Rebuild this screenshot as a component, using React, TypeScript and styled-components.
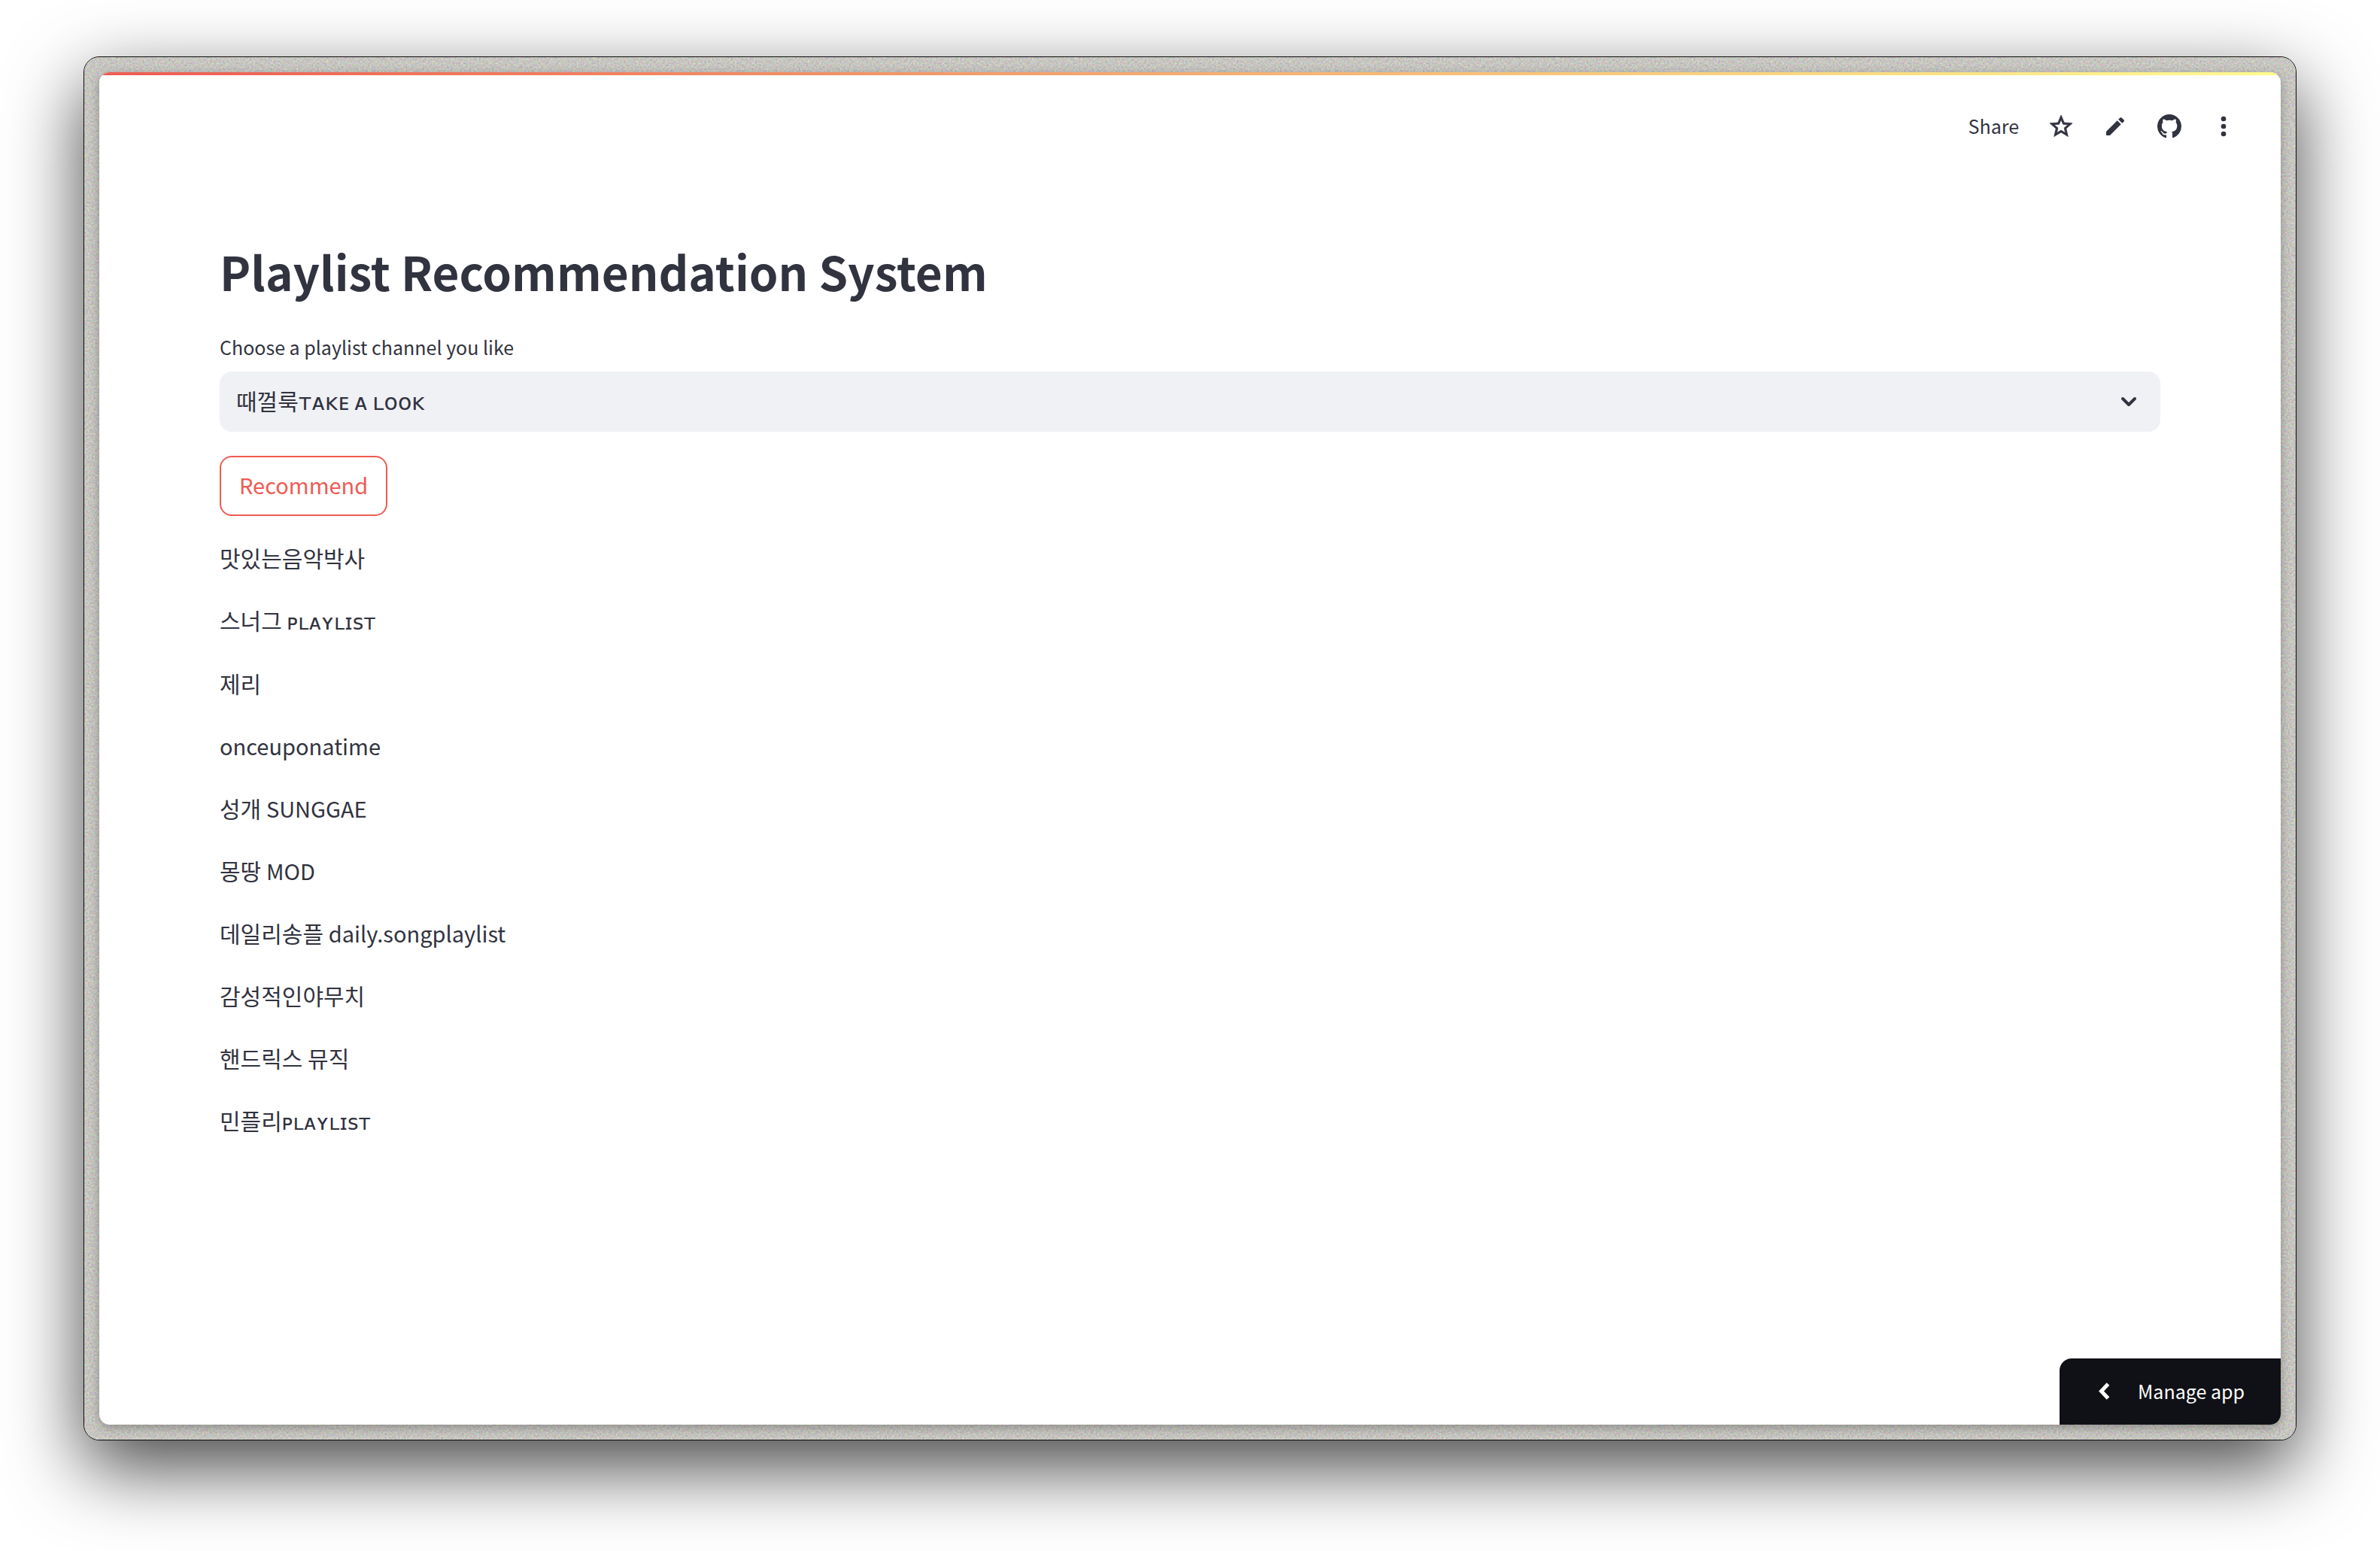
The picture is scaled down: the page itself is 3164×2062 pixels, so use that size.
import React from "react";
import styled, { createGlobalStyle } from "styled-components";

const INK = "#31333f";
const RED = "#ee5b53";

const GlobalStyle = createGlobalStyle`
  *, *::before, *::after { box-sizing: border-box; }
  body {
    margin: 0;
    background: #fff;
    color: ${INK};
    font-family: "Noto Sans CJK KR", "DejaVu Sans", sans-serif;
  }
  button, select {
    font-family: inherit;
    color: inherit;
    margin: 0;
    cursor: pointer;
  }
`;

const Desktop = styled.div`
  display: flex;
  min-height: 100vh;
  padding: 75px 111px 147px;
`;

const Frame = styled.div`
  position: relative;
  display: flex;
  flex: 1;
  padding: 20px;
  border: 1px solid #0c0c0c;
  border-radius: 21px;
  background: #c3c2bc;
  box-shadow: 0 36px 100px rgba(0, 0, 0, 0.73);
`;

const Grain = styled.svg`
  position: absolute;
  inset: 0;
  width: 100%;
  height: 100%;
  border-radius: 20px;
`;

const PageShadow = styled.div`
  position: relative;
  display: flex;
  flex: 1;
  border-radius: 14px;
  box-shadow: 0 4px 14px rgba(0, 0, 0, 0.3);
`;

const Page = styled.div`
  display: flex;
  flex: 1;
  flex-direction: column;
  overflow: hidden;
  border-radius: 14px;
  background: #fff;
`;

const Decoration = styled.div`
  height: 4px;
  background: linear-gradient(90deg, ${RED}, #fffb8c);
`;

const Toolbar = styled.header`
  display: flex;
  justify-content: flex-end;
  align-items: center;
  gap: 16px;
  height: 136px;
  padding: 0 48px;
`;

const ToolButton = styled.button`
  display: flex;
  align-items: center;
  justify-content: center;
  min-width: 56px;
  height: 56px;
  padding: 0;
  border: 0;
  background: none;
`;

const ShareButton = styled(ToolButton)`
  padding: 0 12px 2px;
  font-size: 25px;
  line-height: 40px;
`;

const Content = styled.main`
  display: flex;
  flex: 1;
  flex-direction: column;
  align-items: flex-start;
  padding: 80px 160px;
`;

const Title = styled.h1`
  margin: 0;
  font-size: 62px;
  font-weight: 700;
  line-height: 88px;
`;

const Field = styled.div`
  display: flex;
  flex-direction: column;
  gap: 13px;
  width: 100%;
  margin: 37px 0 32px;
`;

const Label = styled.label`
  font-size: 25px;
  line-height: 40px;
`;

const SelectBox = styled.div`
  display: grid;
  align-items: center;
  > * { grid-area: 1 / 1; }
  > svg {
    justify-self: end;
    margin-right: 24px;
    pointer-events: none;
  }
`;

const Select = styled.select`
  width: 100%;
  height: 80px;
  padding: 0 80px 4px 22px;
  border: 0;
  border-radius: 16px;
  background: #f0f1f5;
  font-size: 30px;
  appearance: none;
`;

const Recommend = styled.button`
  height: 80px;
  padding: 0 24px 4px;
  border: 2px solid ${RED};
  border-radius: 16px;
  background: #fff;
  color: ${RED};
  font-size: 29px;
  line-height: 51px;
`;

const Results = styled.div`
  display: flex;
  flex-direction: column;
  gap: 32px;
  margin-top: 30px;
`;

const Result = styled.p`
  margin: 0;
  font-size: 30px;
  line-height: 51px;
`;

const Latin = styled.span`
  font-size: 29px;
`;

const SmallCaps = styled.span`
  font-size: 28px;
`;

const ManageApp = styled.button`
  display: flex;
  align-items: center;
  align-self: flex-end;
  gap: 24px;
  height: 88px;
  padding: 0 48px 2px 40px;
  border: 0;
  border-radius: 16px 0 0 0;
  background: #101116;
  color: #fff;
  font-size: 25px;
  line-height: 40px;
`;

const StarIcon = () => (
  <svg width="36" height="36" viewBox="0 0 24 24" fill="currentColor" aria-hidden="true">
    <path
      stroke="currentColor"
      strokeWidth="0.5"
      d="M22 9.24l-7.19-.62L12 2 9.19 8.63 2 9.24l5.46 4.73L5.82 21 12 17.27 18.18 21l-1.63-7.03L22 9.24zM12 15.4l-3.76 2.27 1-4.28-3.32-2.88 4.38-.38L12 6.1l1.71 4.04 4.38.38-3.32 2.88 1 4.28L12 15.4z"
    />
  </svg>
);

const PencilIcon = () => (
  <svg width="32" height="32" viewBox="0 0 24 24" fill="currentColor" aria-hidden="true">
    <path d="M3 17.46v3.04c0 .28.22.5.5.5h3.04c.13 0 .26-.05.35-.15L17.81 9.94l-3.75-3.75L3.15 17.1c-.1.1-.15.22-.15.36zM20.71 7.04a.996.996 0 000-1.41l-2.34-2.34a.996.996 0 00-1.41 0l-1.83 1.83 3.75 3.75 1.83-1.83z" />
  </svg>
);

const GitHubIcon = () => (
  <svg width="32" height="32" viewBox="0 0 16 16" fill="currentColor" aria-hidden="true">
    <path d="M8 0C3.58 0 0 3.58 0 8c0 3.54 2.29 6.53 5.47 7.59.4.07.55-.17.55-.38 0-.19-.01-.82-.01-1.49-2.01.37-2.53-.49-2.69-.94-.09-.23-.48-.94-.82-1.13-.28-.15-.68-.52-.01-.53.63-.01 1.08.58 1.23.82.72 1.21 1.87.87 2.33.66.07-.52.28-.87.51-1.07-1.78-.2-3.64-.89-3.64-3.95 0-.87.31-1.59.82-2.15-.08-.2-.36-1.02.08-2.12 0 0 .67-.21 2.2.82.64-.18 1.32-.27 2-.27s1.36.09 2 .27c1.53-1.04 2.2-.82 2.2-.82.44 1.1.16 1.92.08 2.12.51.56.82 1.27.82 2.15 0 3.07-1.87 3.75-3.65 3.95.29.25.54.73.54 1.48 0 1.07-.01 1.93-.01 2.2 0 .21.15.46.55.38A8.01 8.01 0 0016 8c0-4.42-3.58-8-8-8z" />
  </svg>
);

const MoreIcon = () => (
  <svg width="40" height="40" viewBox="0 0 24 24" fill="currentColor" aria-hidden="true">
    <circle cx="12" cy="6" r="2" />
    <circle cx="12" cy="12" r="2" />
    <circle cx="12" cy="18" r="2" />
  </svg>
);

const ChevronDown = () => (
  <svg width="36" height="36" viewBox="0 0 36 36" fill="none" aria-hidden="true">
    <path d="M10 14l8 8 8-8" stroke="currentColor" strokeWidth="4" strokeLinecap="round" strokeLinejoin="round" />
  </svg>
);

const ChevronLeft = () => (
  <svg width="40" height="40" viewBox="0 0 40 40" fill="none" aria-hidden="true">
    <path d="M24.5 11L15.5 20.5l9 9.5" stroke="currentColor" strokeWidth="5" />
  </svg>
);

const channels: React.ReactNode[] = [
  "맛있는음악박사",
  <>스너그 <SmallCaps>ᴘʟᴀʏʟɪꜱᴛ</SmallCaps></>,
  "제리",
  <Latin>onceuponatime</Latin>,
  <>성개 <Latin>SUNGGAE</Latin></>,
  <>몽땅 <Latin>MOD</Latin></>,
  <>데일리송플 <Latin>daily.songplaylist</Latin></>,
  "감성적인야무치",
  "핸드릭스 뮤직",
  <>민플리<SmallCaps>ᴘʟᴀʏʟɪꜱᴛ</SmallCaps></>,
];

export default function App() {
  return (
    <>
      <GlobalStyle />
      <Desktop>
        <Frame>
          <Grain aria-hidden="true">
            <filter id="grain" colorInterpolationFilters="sRGB">
              <feTurbulence type="fractalNoise" baseFrequency="0.4" numOctaves="2" seed="4" />
              <feColorMatrix
                values="0.35 0 0 0 0.605
                        0 0.35 0 0 0.6
                        0 0 0.35 0 0.58
                        0 0 0 0 1"
              />
            </filter>
            <rect width="100%" height="100%" filter="url(#grain)" />
          </Grain>
          <PageShadow>
            <Page>
              <Decoration />
              <Toolbar>
                <ShareButton type="button">Share</ShareButton>
                <ToolButton type="button" aria-label="Favorite"><StarIcon /></ToolButton>
                <ToolButton type="button" aria-label="Edit"><PencilIcon /></ToolButton>
                <ToolButton type="button" aria-label="View source"><GitHubIcon /></ToolButton>
                <ToolButton type="button" aria-label="Main menu"><MoreIcon /></ToolButton>
              </Toolbar>
              <Content>
                <Title>Playlist Recommendation System</Title>
                <Field>
                  <Label htmlFor="channel">Choose a playlist channel you like</Label>
                  <SelectBox>
                    <Select id="channel" defaultValue="take-a-look">
                      <option value="take-a-look">때껄룩ᴛᴀᴋᴇ ᴀ ʟᴏᴏᴋ</option>
                    </Select>
                    <ChevronDown />
                  </SelectBox>
                </Field>
                <Recommend type="button">Recommend</Recommend>
                <Results>
                  {channels.map((name, index) => (
                    <Result key={index}>{name}</Result>
                  ))}
                </Results>
              </Content>
              <ManageApp type="button">
                <ChevronLeft />
                Manage app
              </ManageApp>
            </Page>
          </PageShadow>
        </Frame>
      </Desktop>
    </>
  );
}
